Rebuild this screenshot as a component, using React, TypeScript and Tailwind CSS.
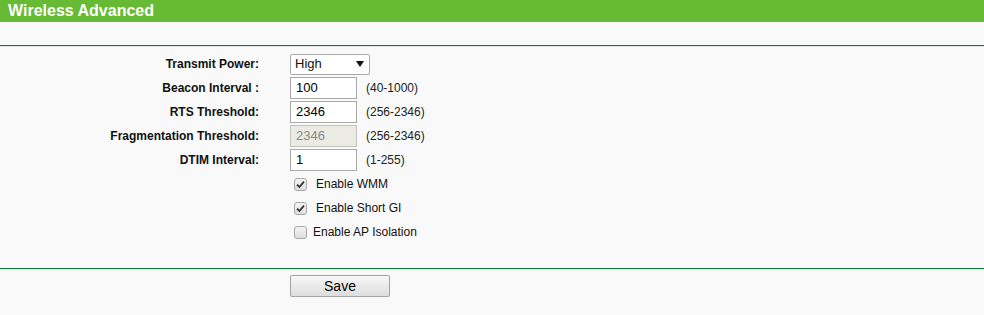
import React from 'react';

type Row = { label: string; value: string; range: string; disabled?: boolean };

const rows: Row[] = [
  { label: 'Beacon Interval :', value: '100', range: '(40-1000)' },
  { label: 'RTS Threshold:', value: '2346', range: '(256-2346)' },
  { label: 'Fragmentation Threshold:', value: '2346', range: '(256-2346)', disabled: true },
  { label: 'DTIM Interval:', value: '1', range: '(1-255)' },
];

const checks = [
  { label: 'Enable WMM', on: true },
  { label: 'Enable Short GI', on: true },
  { label: 'Enable AP Isolation', on: false },
];

const Label: React.FC<{ children: React.ReactNode }> = ({ children }) => (
  <div className="w-[259px] text-right text-[12px] font-bold text-[#111] whitespace-nowrap">{children}</div>
);

const Divider = () => (
  <div>
    <div className="h-px bg-[#0f7a3a]" />
    <div className="h-px bg-[#dfe6df]" />
  </div>
);

const Check: React.FC<{ on: boolean }> = ({ on }) => (
  <span className="flex h-[13px] w-[13px] items-center justify-center rounded-[3px] border border-[#a8a8a8] bg-gradient-to-b from-[#f4f4f4] to-[#dedede]">
    {on && (
      <svg width="9" height="9" viewBox="0 0 9 9">
        <path d="M1 4.6 L3.4 7 L8 1.6" fill="none" stroke="#333" strokeWidth="1.8" />
      </svg>
    )}
  </span>
);

export default function App() {
  return (
    <div className="min-h-[315px] w-full bg-[#f9f9f9] text-black" style={{ fontFamily: '"Liberation Sans", Arial, sans-serif' }}>
      <div className="flex h-[22px] items-center bg-[#66ba34] px-[8px] text-[16px] font-bold leading-none text-white">
        Wireless Advanced
      </div>
      <div className="h-[23px]" />
      <Divider />

      <div className="pt-[5px]">
        <div className="flex h-[24px] items-center">
          <Label>Transmit Power:</Label>
          <div className="ml-[31px] flex h-[21px] w-[80px] items-center justify-between rounded-[2px] border border-[#a9a9a9] bg-white pl-[4px] pr-[5px] text-[13px] text-[#111]">
            <span>High</span>
            <svg width="8" height="6" viewBox="0 0 8 6">
              <path d="M0 0 H8 L4 6 Z" fill="#111" />
            </svg>
          </div>
        </div>

        {rows.map((r) => (
          <div key={r.label} className="flex h-[24px] items-center">
            <Label>{r.label}</Label>
            <div
              className={
                r.disabled
                  ? 'ml-[31px] flex h-[22px] w-[67px] items-center border border-[#c2c2bd] bg-[#ebebe4] pl-[5px] text-[13px] text-[#8a8a8a]'
                  : 'ml-[31px] flex h-[22px] w-[67px] items-center border border-[#a9a9a9] bg-white pl-[5px] text-[13px] text-black'
              }
            >
              {r.value}
            </div>
            <span className="ml-[9px] text-[12px] text-[#222]">{r.range}</span>
          </div>
        ))}

        {checks.map((c) => (
          <div key={c.label} className="flex h-[24px] items-center pl-[294px]">
            <Check on={c.on} />
            <span className={c.on ? 'ml-[9px] text-[12px] text-[#111]' : 'ml-[6px] text-[12px] text-[#111]'}>{c.label}</span>
          </div>
        ))}
      </div>

      <div className="h-[24px]" />
      <Divider />

      <div className="pl-[290px] pt-[5px]">
        <button className="flex h-[22px] w-[100px] items-center justify-center rounded-[2px] border border-[#a2a2a2] bg-gradient-to-b from-[#f7f7f7] to-[#dddddd] text-[14px] text-black">
          Save
        </button>
      </div>
    </div>
  );
}
